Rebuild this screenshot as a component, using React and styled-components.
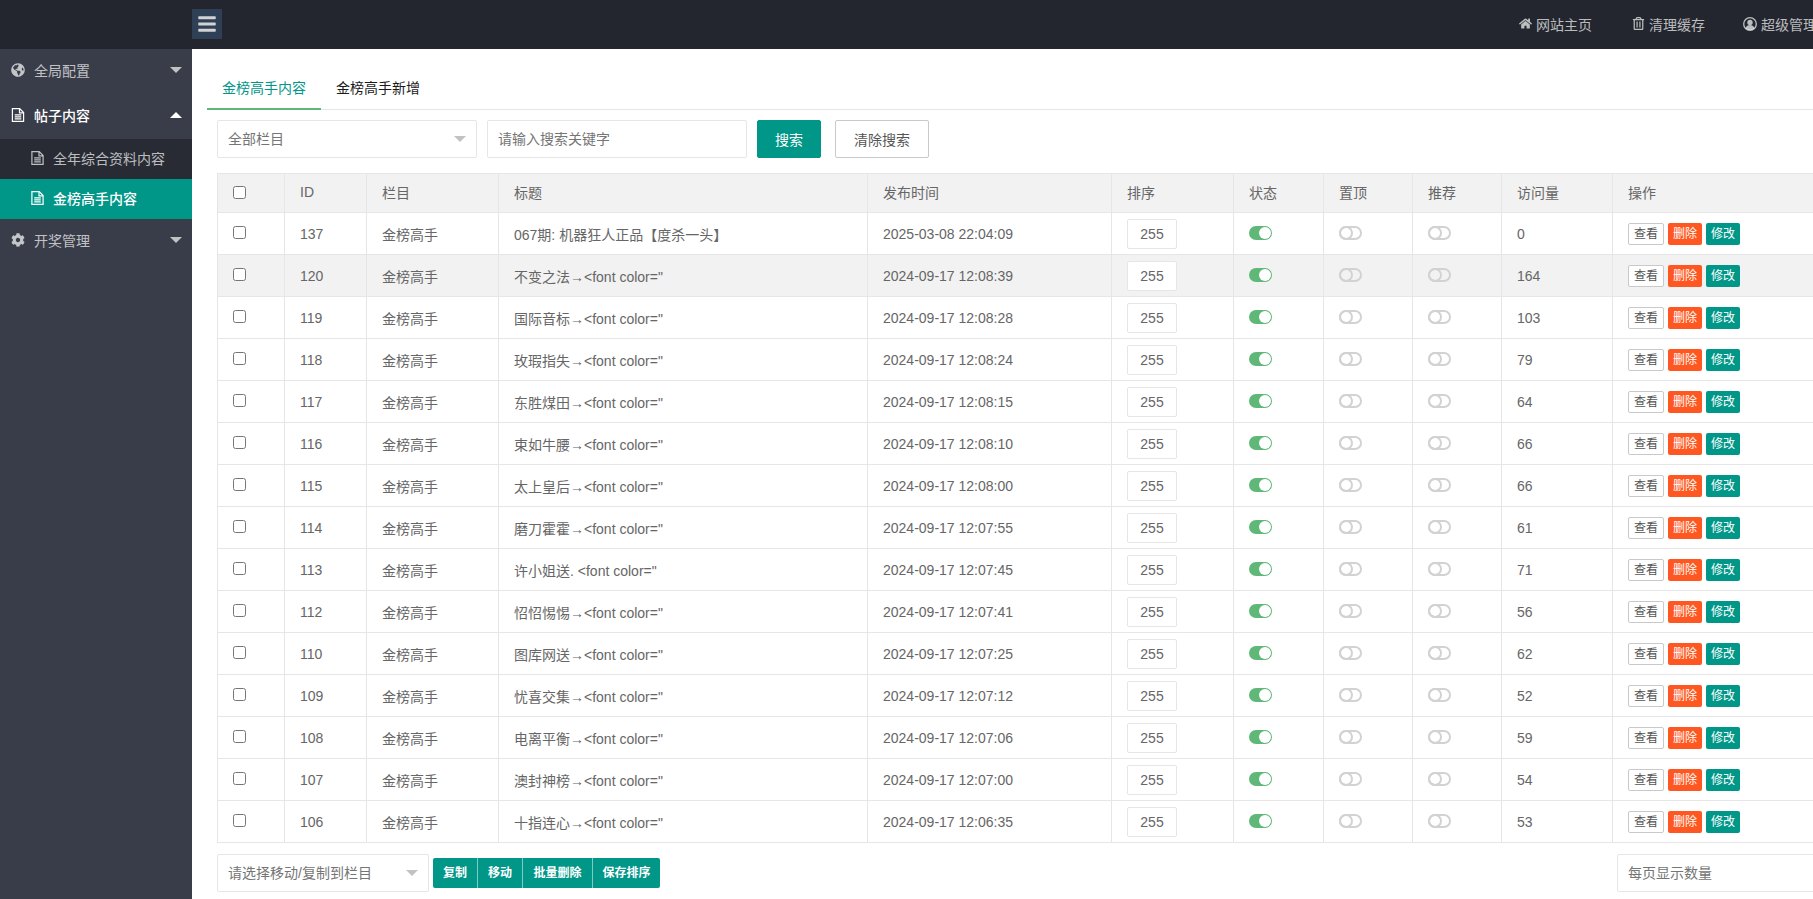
import React from 'react'
import styled, { createGlobalStyle } from 'styled-components'
import { FaBars, FaCog, FaGlobeAmericas, FaHome, FaRegTrashAlt } from 'react-icons/fa'

const GlobalStyle = createGlobalStyle`
  html, body {
    margin: 0;
    height: 100%;
    overflow: hidden;
    background: #fff;
  }
  body {
    font-family: "Liberation Sans", "Noto Sans CJK SC", sans-serif;
    font-size: 14px;
    color: #666;
  }
  *, *::after { box-sizing: border-box; }
`

const Page = styled.div`
  width: 1813px;
  height: 899px;
  display: flex;
  flex-direction: column;
  overflow: hidden;
`
const Header = styled.header`
  flex: none;
  height: 49px;
  background: #23262e;
  display: flex;
  align-items: center;
  padding-left: 192px;
`
const Burger = styled.div`
  width: 30px;
  height: 30px;
  margin-top: -2px;
  background: #2f4056;
  color: #d2d2d2;
  display: flex;
  align-items: center;
  justify-content: center;
  font-size: 20px;
`
const TopLinks = styled.nav`
  margin-left: auto;
  display: flex;
  width: 294px;
  flex: none;
  padding-bottom: 2px;
`
const TopLink = styled.a`
  display: flex;
  flex: none;
  align-items: center;
  gap: 4px;
  width: ${p => p.$w}px;
  white-space: nowrap;
  color: rgba(255, 255, 255, 0.7);
  font-size: 14px;
  svg { font-size: 13px; flex: none; }
`
const Body = styled.div`
  flex: 1;
  display: flex;
  min-height: 0;
`
const Sidebar = styled.aside`
  flex: none;
  width: 192px;
  background: #393d49;
`
const NavItem = styled.div`
  height: 45px;
  display: flex;
  align-items: center;
  padding: 0 10px 3px 11px;
  gap: 9px;
  font-size: 14px;
  color: ${p => (p.$open ? '#fff' : 'rgba(255,255,255,.7)')};
  font-weight: ${p => (p.$open ? 500 : 'normal')};
  svg { font-size: 14px; width: 14px; flex: none; }
`
const Caret = styled.i`
  margin-left: auto;
  width: 0;
  height: 0;
  border: 6px solid transparent;
  ${p => (p.$up
    ? 'border-bottom-color: #fff; border-top-width: 0;'
    : 'border-top-color: #c2c2c2; border-bottom-width: 0;')}
`
const SubNav = styled.div`
  background: #282b33;
`
const SubItem = styled.div`
  height: 40px;
  display: flex;
  align-items: center;
  padding: 0 0 2px 31px;
  gap: 9px;
  font-size: 14px;
  color: ${p => (p.$active ? '#fff' : 'rgba(255,255,255,.7)')};
  background: ${p => (p.$active ? '#009688' : 'transparent')};
  font-weight: ${p => (p.$active ? 500 : 'normal')};
  svg { flex: none; }
`
const Main = styled.main`
  flex: none;
  width: 1700px;
`
const Tabs = styled.div`
  display: flex;
  height: 61px;
  margin-left: 15px;
  padding-top: 21px;
  border-bottom: 1px solid #e6e6e6;
`
const Tab = styled.div`
  height: 40px;
  line-height: 36px;
  padding: 0 15px;
  min-width: 65px;
  color: ${p => (p.$active ? '#009688' : '#1a1a1a')};
  ${p => p.$active && 'border-bottom: 2px solid #5fb878;'}
`
const Content = styled.div`
  padding: 10px 0 0 25px;
`
const Toolbar = styled.div`
  display: flex;
  align-items: center;
  height: 38px;
  margin-bottom: 15px;
`
const Select = styled.div`
  position: relative;
  flex: none;
  width: ${p => p.$w}px;
  height: 38px;
  margin-right: ${p => p.$mr || 0}px;
  padding-left: 10px;
  line-height: 36px;
  border: 1px solid #e6e6e6;
  border-radius: 2px;
  background: #fff;
  color: #757575;
  &::after {
    content: "";
    position: absolute;
    right: 10px;
    top: 15px;
    border: 6px solid transparent;
    border-top-color: #c2c2c2;
    border-bottom-width: 0;
  }
`
const SearchInput = styled.input`
  flex: none;
  width: 260px;
  height: 38px;
  margin-right: 10px;
  padding-left: 10px;
  border: 1px solid #e6e6e6;
  border-radius: 2px;
  font: inherit;
  outline: none;
  &::placeholder { color: #757575; opacity: 1; }
`
const Btn = styled.button`
  flex: none;
  height: 38px;
  padding: 0;
  width: ${p => p.$w}px;
  margin-right: 14px;
  border-radius: 2px;
  font: inherit;
  font-size: 14px;
  border: 1px solid ${p => (p.$plain ? '#c9c9c9' : '#009688')};
  background: ${p => (p.$plain ? '#fff' : '#009688')};
  color: ${p => (p.$plain ? '#555' : '#fff')};
`
const Table = styled.table`
  table-layout: fixed;
  width: 1660px;
  border-collapse: collapse;
  border: 1px solid #e6e6e6;
  background: #fff;
`
const Th = styled.th`
  height: 39px;
  padding: 0 15px 2px;
  background: #f2f2f2;
  border: 1px solid #e6e6e6;
  font-weight: normal;
  text-align: left;
  color: #666;
  font-size: 14px;
`
const Row = styled.tr`
  background: ${p => (p.$hover ? '#f2f2f2' : '#fff')};
`
const Td = styled.td`
  height: 42px;
  padding: 0 15px;
  border: 1px solid #e6e6e6;
  color: #666;
  font-size: 14px;
  white-space: nowrap;
`
const Check = styled.input.attrs({ type: 'checkbox' })`
  display: block;
  margin: ${p => (p.$head ? '0' : '-2px 0 0')};
  width: 13px;
  height: 13px;
`
const SortInput = styled.input`
  display: block;
  width: 50px;
  height: 30px;
  border: 1px solid #e6e6e6;
  border-radius: 2px;
  background: #fff;
  color: #666;
  text-align: center;
  font: inherit;
  padding: 0;
  outline: none;
`
const Switch = styled.span`
  position: relative;
  display: block;
  width: 23px;
  height: 14px;
  margin-top: -1px;
  border-radius: 20px;
  border: 2px solid ${p => (p.$on ? '#5fb878' : '#d2d2d2')};
  background: ${p => (p.$on ? '#5fb878' : 'transparent')};
  &::after {
    content: "";
    position: absolute;
    ${p => (p.$on
      ? 'right: -1px; top: -1px; width: 12px; height: 12px; background: #fff;'
      : 'left: -2px; top: -2px; width: 14px; height: 14px; border: 2px solid #d2d2d2;')}
    border-radius: 50%;
  }
`
const Actions = styled.div`
  display: flex;
  gap: 4px;
  margin-top: 1px;
`
const ActionBtn = styled.span`
  width: ${p => p.$w}px;
  height: 22px;
  line-height: ${p => (p.$plain ? '20px' : '22px')};
  text-align: center;
  font-size: 12px;
  border-radius: 2px;
  background: ${p => p.$bg};
  color: ${p => (p.$plain ? '#555' : '#fff')};
  ${p => p.$plain && 'border: 1px solid #c9c9c9;'}
`
const Footer = styled.div`
  display: flex;
  align-items: center;
  height: 38px;
  margin-top: 11px;
  width: 1660px;
`
const BtnGroup = styled.div`
  display: flex;
  margin-left: 4px;
  height: 30px;
  border-radius: 2px;
  overflow: hidden;
`
const GroupBtn = styled.span`
  width: ${p => p.$w}px;
  line-height: 30px;
  text-align: center;
  font-size: 12px;
  font-weight: bold;
  color: #fff;
  background: #009688;
  & + & { border-left: 1px solid rgba(255, 255, 255, 0.5); }
`
const PerPage = styled(Select)`
  margin-left: auto;
`

const FileIcon = () => (
  <svg width="13" height="14" viewBox="0 0 13 14" fill="none" stroke="currentColor" strokeWidth="1.2">
    <path d="M.9.7h7.3l3.9 3.9v8.7H.9z" />
    <path d="M8 1v3.9h4" />
    <path d="M3.2 6.8h6.6M3.2 8.8h6.6M3.2 10.8h6.6" />
  </svg>
)

const UserIcon = () => (
  <svg width="14" height="14" viewBox="0 0 14 14" fill="currentColor">
    <circle cx="7" cy="7" r="6.3" fill="none" stroke="currentColor" strokeWidth="1.3" />
    <circle cx="7" cy="5.4" r="2.7" />
    <path d="M2.6 11.4c.6-2.3 2.2-3.3 4.4-3.3s3.8 1 4.4 3.3a6.3 6.3 0 0 1-8.8 0z" />
  </svg>
)

const rows = [
  [137, '067期: 机器狂人正品【度杀一头】', '2025-03-08 22:04:09', 0],
  [120, '不变之法→<font color="', '2024-09-17 12:08:39', 164],
  [119, '国际音标→<font color="', '2024-09-17 12:08:28', 103],
  [118, '玫瑕指失→<font color="', '2024-09-17 12:08:24', 79],
  [117, '东胜煤田→<font color="', '2024-09-17 12:08:15', 64],
  [116, '束如牛腰→<font color="', '2024-09-17 12:08:10', 66],
  [115, '太上皇后→<font color="', '2024-09-17 12:08:00', 66],
  [114, '磨刀霍霍→<font color="', '2024-09-17 12:07:55', 61],
  [113, '许小姐送. <font color="', '2024-09-17 12:07:45', 71],
  [112, '怊怊惕惕→<font color="', '2024-09-17 12:07:41', 56],
  [110, '图库网送→<font color="', '2024-09-17 12:07:25', 62],
  [109, '忧喜交集→<font color="', '2024-09-17 12:07:12', 52],
  [108, '电离平衡→<font color="', '2024-09-17 12:07:06', 59],
  [107, '澳封神榜→<font color="', '2024-09-17 12:07:00', 54],
  [106, '十指连心→<font color="', '2024-09-17 12:06:35', 53],
]

const colWidths = [67, 82, 132, 369, 244, 122, 90, 89, 89, 111, 265]
const heads = ['ID', '栏目', '标题', '发布时间', '排序', '状态', '置顶', '推荐', '访问量', '操作']

export default function App() {
  return (
    <Page>
      <GlobalStyle />
      <Header>
        <Burger><FaBars /></Burger>
        <TopLinks>
          <TopLink $w={113}><FaHome />网站主页</TopLink>
          <TopLink $w={111}><FaRegTrashAlt />清理缓存</TopLink>
          <TopLink $w={70}><UserIcon />超级管理员</TopLink>
        </TopLinks>
      </Header>
      <Body>
        <Sidebar>
          <NavItem><FaGlobeAmericas />全局配置<Caret /></NavItem>
          <NavItem $open><FileIcon />帖子内容<Caret $up /></NavItem>
          <SubNav>
            <SubItem><FileIcon />全年综合资料内容</SubItem>
            <SubItem $active><FileIcon />金榜高手内容</SubItem>
          </SubNav>
          <NavItem><FaCog />开奖管理<Caret /></NavItem>
        </Sidebar>
        <Main>
          <Tabs>
            <Tab $active>金榜高手内容</Tab>
            <Tab>金榜高手新增</Tab>
          </Tabs>
          <Content>
            <Toolbar>
              <Select $w={260} $mr={10}>全部栏目</Select>
              <SearchInput placeholder="请输入搜索关键字" />
              <Btn $w={64}>搜索</Btn>
              <Btn $w={94} $plain>清除搜索</Btn>
            </Toolbar>
            <Table>
              <colgroup>
                {colWidths.map((w, i) => <col key={i} width={w} />)}
              </colgroup>
              <thead>
                <tr>
                  <Th><Check $head /></Th>
                  {heads.map(h => <Th key={h}>{h}</Th>)}
                </tr>
              </thead>
              <tbody>
                {rows.map((r, i) => (
                  <Row key={r[0]} $hover={i === 1}>
                    <Td><Check /></Td>
                    <Td>{r[0]}</Td>
                    <Td>金榜高手</Td>
                    <Td>{r[1]}</Td>
                    <Td>{r[2]}</Td>
                    <Td><SortInput defaultValue="255" /></Td>
                    <Td><Switch $on /></Td>
                    <Td><Switch /></Td>
                    <Td><Switch /></Td>
                    <Td>{r[3]}</Td>
                    <Td>
                      <Actions>
                        <ActionBtn $w={36} $bg="#fff" $plain>查看</ActionBtn>
                        <ActionBtn $w={34} $bg="#ff5722">删除</ActionBtn>
                        <ActionBtn $w={34} $bg="#009688">修改</ActionBtn>
                      </Actions>
                    </Td>
                  </Row>
                ))}
              </tbody>
            </Table>
            <Footer>
              <Select $w={212}>请选择移动/复制到栏目</Select>
              <BtnGroup>
                <GroupBtn $w={44}>复制</GroupBtn>
                <GroupBtn $w={45}>移动</GroupBtn>
                <GroupBtn $w={70}>批量删除</GroupBtn>
                <GroupBtn $w={68}>保存排序</GroupBtn>
              </BtnGroup>
              <PerPage $w={260}>每页显示数量</PerPage>
            </Footer>
          </Content>
        </Main>
      </Body>
    </Page>
  )
}
